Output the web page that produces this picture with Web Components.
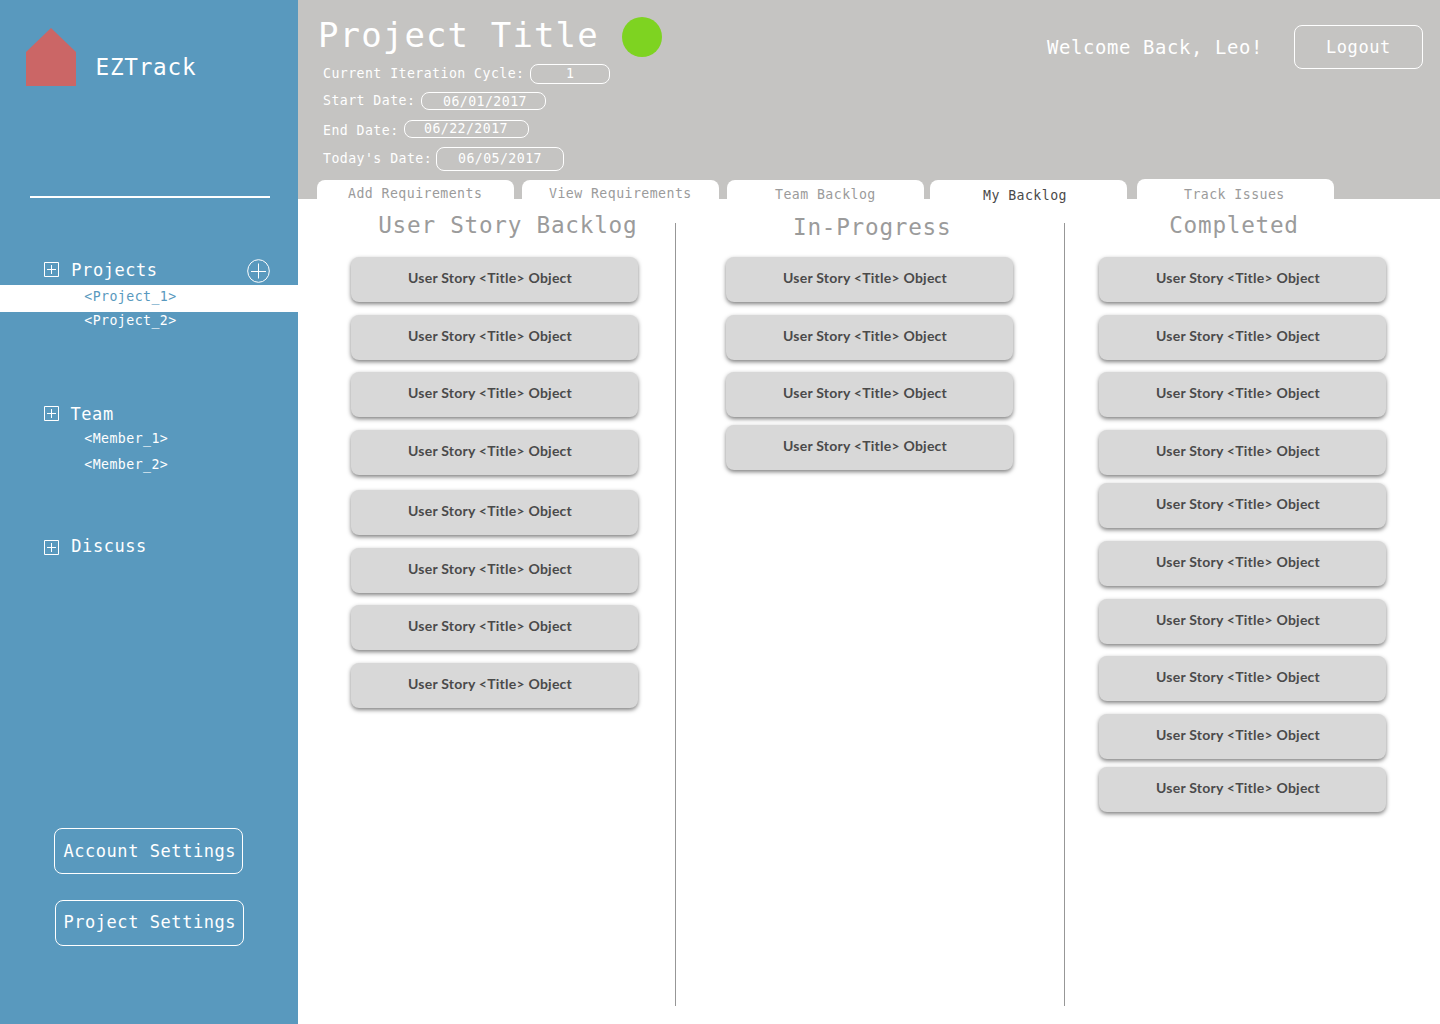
<!DOCTYPE html>
<html lang="en">
<head>
<meta charset="utf-8">
<title>EZTrack</title>
<style>
body{margin:0;width:1440px;height:1024px;overflow:hidden;background:#fff;font-family:"DejaVu Sans Mono",monospace}
</style>
</head>
<body>
<ez-app></ez-app>
<script>
const def = (name, html, setup) => customElements.define(name, class extends HTMLElement {
  constructor() {
    super();
    this.attachShadow({mode: 'open'}).innerHTML = typeof html === 'function' ? '' : html;
  }
  connectedCallback() {
    if (typeof html === 'function') this.shadowRoot.innerHTML = html(this);
    if (setup) setup(this);
  }
});

// A single line of text on a 0.6em grid; x/y are its leading margins.
const LINE = {14: 19, 18: 18, 20: 20, 24: 24, 36: 36};
def('ez-text', el => {
  const s = el.getAttribute('size') || 14;
  return `<style>:host{display:block;flex:none;white-space:pre;font-size:${s * .945}px;letter-spacing:${s * .0311}px;line-height:${LINE[s]}px;
  margin:${el.getAttribute('y') || 0}px 0 0 ${el.getAttribute('x') || 0}px}</style><slot></slot>`;
});

// Rounded outlined box used for buttons and read-only fields.
def('ez-outline', el => `<style>:host{display:flex;align-items:flex-start;flex:none;box-sizing:border-box;border:1px solid #fff;
  border-radius:${el.getAttribute('r') || 8}px;width:${el.getAttribute('w')}px;height:${el.getAttribute('h')}px}</style><slot></slot>`);

def('ez-expander', `<style>:host{display:block;flex:none;width:15px;height:15px}svg{display:block}</style>
  <svg width="15" height="15" fill="none" stroke="#fff"><path d="M.5.5h14v14H.5zM7.5 3v9M3 7.5h9"/></svg>`);

def('ez-group', el => `<style>:host{display:block}
  .head{display:flex;align-items:flex-start;height:23px;padding-left:44px}
  </style><div class="head"><ez-expander></ez-expander>
  <ez-text size="18" x="${el.getAttribute('tx')}" y="${el.getAttribute('ty')}">${el.getAttribute('label')}</ez-text><slot name="action"></slot></div><slot></slot>`);

def('ez-entry', `<style>:host{display:flex;align-items:flex-start;height:27px;padding-left:84px;box-sizing:border-box}
  :host([active]){background:#fff;color:#5999be}</style><slot></slot>`);

def('ez-sidebar', `<style>
  :host{display:flex;flex-direction:column;flex:none;width:298px;height:1024px;background:#5999be;color:#fff}
  .brand{display:flex;align-items:flex-start;height:168px;padding:28px 0 0 26px}
  svg{display:block;flex:none}
  .rule{height:2px;width:240px;margin-left:29.5px;background:#fff}
  .nav{height:630px;padding-top:64px;box-sizing:border-box}
  ez-group{height:144px}
  ez-group+ez-group{height:134px}
  .add{margin:-3px 0 0 89px}
  .buttons{display:flex;flex-direction:column;gap:26px}
  </style>
  <div class="brand"><svg width="50" height="58"><path d="M25 0 50 24V58H0V24Z" fill="#cb6666"/></svg><ez-text size="24" x="19.5" y="27">EZTrack</ez-text></div>
  <div class="rule"></div>
  <div class="nav">
    <ez-group label="Projects" tx="12.3" ty="-1">
      <svg class="add" slot="action" width="23" height="24" fill="none" stroke="#fff"><ellipse cx="11.5" cy="12" rx="10.8" ry="11.3"/><path d="M11.5 4.5v15M4 12.5h15"/></svg>
      <ez-entry active><ez-text y="2" x=".3">&lt;Project_1&gt;</ez-text></ez-entry>
      <ez-entry><ez-text y="-1" x=".3">&lt;Project_2&gt;</ez-text></ez-entry>
    </ez-group>
    <ez-group label="Team" tx="11.5" ty="-1">
      <ez-entry><ez-text x=".3">&lt;Member_1&gt;</ez-text></ez-entry>
      <ez-entry><ez-text y="-1" x=".3">&lt;Member_2&gt;</ez-text></ez-entry>
    </ez-group>
    <ez-group label="Discuss" tx="12.3" ty="-3"></ez-group>
  </div>
  <div class="buttons">
    <ez-outline w="189" h="46" style="margin-left:54px"><ez-text size="18" x="8.4" y="13">Account Settings</ez-text></ez-outline>
    <ez-outline w="189" h="46" style="margin-left:55px"><ez-text size="18" x="7.4" y="12">Project Settings</ez-text></ez-outline>
  </div>`);

// Label plus boxed value.
def('ez-field', el => {
  const a = n => el.getAttribute(n);
  return `<style>:host{display:flex;align-items:flex-start;height:${a('h')}px}
  .l{width:${a('lw')}px;flex:none}</style>
  <div class="l"><ez-text y="${a('ly')}">${a('label')}</ez-text></div>
  <ez-outline w="${a('w')}" h="${a('h')}"><ez-text x="${a('vx')}" y="${a('vy')}"><slot></slot></ez-text></ez-outline>`;
});

def('ez-tab', el => `<style>:host{display:flex;align-items:flex-start;flex:none;width:197px;height:19px;background:#fff;border-radius:8px 8px 0 0;color:#9b9b9b}
  :host([active]){color:#4a4a4a}:host([tall]){height:20px}</style><ez-text x="${el.getAttribute('tx')}" y="${el.getAttribute('ty')}"><slot></slot></ez-text>`);

def('ez-header', `<style>
  :host{display:flex;flex-direction:column;justify-content:space-between;height:199px;background:#c5c4c2;color:#fff}
  .top{display:flex;justify-content:space-between;align-items:flex-start;padding-right:17px}
  .title{display:flex;align-items:flex-start;height:64px;padding-left:20px}
  .dot{width:40px;height:40px;border-radius:50%;background:#7ed321;margin:17px 0 0 23px}
  .user{display:flex;align-items:flex-start;padding-top:25px}
  .fields{padding-left:25px}
  .tabs{display:flex;align-items:flex-end;padding-left:19px;height:20px}
  </style>
  <div class="top">
    <div>
      <div class="title"><ez-text size="36" y="17">Project Title</ez-text><div class="dot"></div></div>
      <div class="fields">
        <ez-field label="Current Iteration Cycle:" lw="207" w="80" h="20" ly="0" vx="35" vy="-1" style="margin-bottom:8px">1</ez-field>
        <ez-field label="Start Date:" lw="98" w="125" h="18" ly="-1" vx="21" vy="-1" style="margin-bottom:10px">06/01/2017</ez-field>
        <ez-field label="End Date:" lw="81" w="125" h="18" ly="1" vx="19" vy="-2" style="margin-bottom:9px">06/22/2017</ez-field>
        <ez-field label="Today's Date:" lw="113" w="128" h="24" ly="2" vx="21" vy="1">06/05/2017</ez-field>
      </div>
    </div>
    <div class="user"><ez-text size="20" y="12" style="margin-right:31px">Welcome Back, Leo!</ez-text>
      <ez-outline w="129" h="44"><ez-text size="18" x="31" y="12">Logout</ez-text></ez-outline></div>
  </div>
  <div class="tabs">
    <ez-tab tx="31" ty="4" style="margin-right:8px">Add Requirements</ez-tab>
    <ez-tab tx="27" ty="4" style="margin-right:8px">View Requirements</ez-tab>
    <ez-tab tx="48" ty="5" style="margin-right:6px">Team Backlog</ez-tab>
    <ez-tab tx="53" ty="6" active style="margin-right:10px">My Backlog</ez-tab>
    <ez-tab tx="47" ty="6" tall>Track Issues</ez-tab>
  </div>`);

def('ez-card', `<style>:host{display:flex;justify-content:center;box-sizing:border-box;width:287px;height:45px;padding-top:11px;
  background:#d8d8d8;border-radius:8px;box-shadow:0 2px 4px rgba(0,0,0,.5);color:#4a4a4a;
  font:700 14px/20px Lato,sans-serif;letter-spacing:.24px;white-space:pre}
  span{display:block;margin-right:9px}</style><span>User Story &lt;Title&gt; Object</span>`);

// gaps lists the space above each card after the first.
def('ez-column', el => {
  const a = n => el.getAttribute(n);
  const gaps = a('gaps').split(' ');
  return `<style>:host{display:block;flex:none;box-sizing:border-box;width:${a('w')}px}
  .h{height:58px;color:#9b9b9b;display:flex;align-items:flex-start}
  ez-card{margin-left:${a('cx')}px}</style>
  <div class="h"><ez-text size="24" x="${a('hx')}" y="${a('hy')}"><slot></slot></ez-text></div>
  ${['0', ...gaps].map(g => `<ez-card style="margin-top:${g}px"></ez-card>`).join('')}`;
});

def('ez-board', `<style>:host{display:flex;align-items:flex-start;height:825px}
  i{display:block;flex:none;width:1px;height:783px;margin-top:24px;background:#979797}</style>
  <ez-column w="377" hx="80.2" hy="14" cx="53" gaps="13 12 13 15 13 12 13">User Story Backlog</ez-column><i></i>
  <ez-column w="388" hx="117" hy="16" cx="50" gaps="13 12 8">In-Progress</ez-column><i></i>
  <ez-column w="375" hx="104.2" hy="14" cx="34" gaps="13 12 13 8 13 13 12 13 8">Completed</ez-column>`);

def('ez-app', `<style>:host{display:flex;width:1440px;height:1024px}main{flex:1;min-width:0}</style>
  <ez-sidebar></ez-sidebar><main><ez-header></ez-header><ez-board></ez-board></main>`);
</script>
</body>
</html>
